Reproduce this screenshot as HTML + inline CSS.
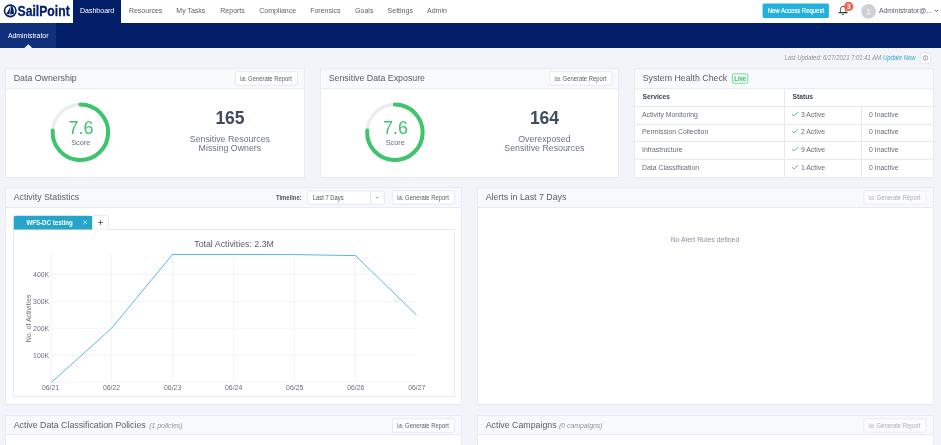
<!DOCTYPE html>
<html>
<head>
<meta charset="utf-8">
<title>Dashboard</title>
<style>
*{box-sizing:border-box;margin:0;padding:0}
html,body{width:941px;height:445px;overflow:hidden;background:#f3f4f9;font-family:"Liberation Sans",sans-serif;color:#4a5060}
.abs{position:absolute}
#top{position:absolute;left:0;top:0;width:941px;height:23px;background:#fff}
.card{position:absolute;background:#fff;border:1px solid #e8ebf5}
.card .hd{position:absolute;left:0;top:0;right:0;background:#f8f9fc;border-bottom:1px solid #e8ebf5}
svg{overflow:visible}
</style>
</head>
<body>
<div id="top"></div>
<div class="abs" style="left:73px;top:0;width:48px;height:23px;background:#021e69"></div>
<div class="abs" style="left:0;top:23px;width:941px;height:25px;background:#021e69"></div>
<div class="abs" style="left:0;top:23px;width:56px;height:25px;background:#10307c"></div>
<div class="card" style="left:5px;top:68px;width:300px;height:110px"><div class="hd" style="height:20px"></div></div>
<div class="card" style="left:320px;top:68px;width:299px;height:110px"><div class="hd" style="height:20px"></div></div>
<div class="card" style="left:634px;top:68px;width:300px;height:110px"><div class="hd" style="height:20px"></div></div>
<div class="abs" style="left:635px;top:106px;width:298px;height:1px;background:#e8eaf3"></div>
<div class="abs" style="left:635px;top:124px;width:298px;height:1px;background:#e8eaf3"></div>
<div class="abs" style="left:635px;top:141px;width:298px;height:1px;background:#e8eaf3"></div>
<div class="abs" style="left:635px;top:159px;width:298px;height:1px;background:#e8eaf3"></div>
<div class="abs" style="left:784px;top:89px;width:1px;height:88px;background:#e8eaf3"></div>
<div class="abs" style="left:861px;top:106px;width:1px;height:71px;background:#e8eaf3"></div>
<div class="card" style="left:5px;top:187px;width:457px;height:218px"><div class="hd" style="height:20px"></div></div>
<div class="card" style="left:477px;top:187px;width:457px;height:218px"><div class="hd" style="height:20px"></div></div>
<div class="abs" style="left:13px;top:229px;width:442px;height:168px;border:1px solid #e8eaf2;background:#fff"></div>
<div class="card" style="left:5px;top:415px;width:457px;height:40px"><div class="hd" style="height:19px"></div></div>
<div class="card" style="left:477px;top:415px;width:457px;height:40px"><div class="hd" style="height:19px"></div></div>
<svg class="abs" style="left:0;top:0;will-change:transform" width="941" height="445" viewBox="0 0 941 445" font-family="Liberation Sans, sans-serif">
<circle cx="10.25" cy="10.87" r="5.75" fill="#fff" stroke="#021e69" stroke-width="1.6"/>
<path d="M10.7 4.9 C9.6 8.4 8.1 11.4 6.2 13.8 L9.3 14.6 C10 11.5 10.5 8.3 10.7 4.9 Z" fill="#021e69"/>
<path d="M11.4 4.6 C13.1 7.5 14 10.6 14 13.8 L9.95 14.6 C10.7 11.4 11.2 8.1 11.4 4.6 Z" fill="#021e69"/>
<text x="17.5" y="16.3" font-weight="700" font-size="14.2" fill="#021e69" stroke="#021e69" stroke-width="0.3" textLength="52.2" lengthAdjust="spacingAndGlyphs">SailPoint</text>
<rect x="762.6" y="3.4" width="66.3" height="14.5" rx="1.5" fill="#22b0df"/>
<g transform="translate(836 3)">
<path d="M3.9 9.7 C4.5 9 4.6 8 4.6 6.4 C4.6 4.6 5.6 3.4 7.1 3.4 C8.6 3.4 9.6 4.6 9.6 6.4 C9.6 8 9.7 9 10.3 9.7" fill="none" stroke="#2e3138" stroke-width="0.95" stroke-linejoin="round"/>
<path d="M3.1 9.6 H11.1" stroke="#2e3138" stroke-width="1.15" stroke-linecap="round"/>
<path d="M6.3 11.3 Q7.1 12 7.9 11.3" fill="none" stroke="#2e3138" stroke-width="1"/>
<circle cx="12.7" cy="3.4" r="4.6" fill="#f4614f"/>
<text x="12.7" y="5.7" text-anchor="middle" font-weight="700" font-size="6.5" fill="#fff">3</text>
</g>
<g transform="translate(861 3.85)">
<circle cx="7.5" cy="7.5" r="7.35" fill="#d0d0d2"/>
<circle cx="7.5" cy="6.5" r="1.45" fill="#e4e6f3"/>
<path d="M5 10.6 C5 8.8 6 8.3 7.5 8.3 C9 8.3 10 8.8 10 10.6 Z" fill="#e4e6f3"/>
</g>
<path d="M934.6 9.9 L936.4 11.7 L938.2 9.9" fill="none" stroke="#4a4f5b" stroke-width="0.9"/>
<path d="M24.4 48 L28.3 44.3 L32.2 48Z" fill="#f3f4f9"/>
<rect x="920.3" y="53" width="10.3" height="10" rx="1.5" fill="#fff" stroke="#dfe2ec" stroke-width="0.9"/>
<g transform="translate(922.7 55.2)"><circle cx="2.8" cy="2.8" r="2.35" fill="none" stroke="#6b7080" stroke-width="0.6"/><path d="M2.8 2.5 V4.2 M2.8 1.4 V2" stroke="#6b7080" stroke-width="0.65"/></g>
<rect x="235.4" y="71.8" width="61.9" height="13.4" rx="1" fill="#fff" stroke="#e1e4ed" stroke-width="0.85"/>
<g transform="translate(240.2 76.1)" opacity="0.8"><path d="M0.35 0 V4.45 H6" fill="none" stroke="#555b69" stroke-width="0.6"/><rect x="1.6" y="1.6" width="0.8" height="1.9" fill="#555b69"/><rect x="2.9" y="0.8" width="0.8" height="2.7" fill="#555b69"/><rect x="4.2" y="1.4" width="0.8" height="2.1" fill="#555b69"/></g>
<rect x="549.9" y="71.8" width="61.9" height="13.4" rx="1" fill="#fff" stroke="#e1e4ed" stroke-width="0.85"/>
<g transform="translate(554.7 76.1)" opacity="0.8"><path d="M0.35 0 V4.45 H6" fill="none" stroke="#555b69" stroke-width="0.6"/><rect x="1.6" y="1.6" width="0.8" height="1.9" fill="#555b69"/><rect x="2.9" y="0.8" width="0.8" height="2.7" fill="#555b69"/><rect x="4.2" y="1.4" width="0.8" height="2.1" fill="#555b69"/></g>
<circle cx="80.4" cy="132.3" r="27.75" fill="none" stroke="#ecedf3" stroke-width="3.4"/>
<path d="M80.4 104.55000000000001 A27.75 27.75 0 1 1 52.70 130.56" fill="none" stroke="#3ec46d" stroke-width="4" stroke-linecap="round"/>
<circle cx="394.9" cy="132.3" r="27.75" fill="none" stroke="#ecedf3" stroke-width="3.4"/>
<path d="M394.9 104.55000000000001 A27.75 27.75 0 1 1 367.20 130.56" fill="none" stroke="#3ec46d" stroke-width="4" stroke-linecap="round"/>
<rect x="732.4" y="73.8" width="15.4" height="9.4" rx="1.3" fill="#f1fbf4" stroke="#6fd596" stroke-width="0.9"/>
<path d="M792.0 114.2 L794.0 116.05 L798.1 112.0" fill="none" stroke="#3cc46c" stroke-width="0.85"/>
<path d="M792.0 131.2 L794.0 133.05 L798.1 129.0" fill="none" stroke="#3cc46c" stroke-width="0.85"/>
<path d="M792.0 149.2 L794.0 151.05 L798.1 147.0" fill="none" stroke="#3cc46c" stroke-width="0.85"/>
<path d="M792.0 167.2 L794.0 169.05 L798.1 165.0" fill="none" stroke="#3cc46c" stroke-width="0.85"/>
<rect x="863.9" y="190.8" width="61.9" height="13.4" rx="1" fill="#fcfcfe" stroke="#e8eaf1" stroke-width="0.85"/>
<g transform="translate(868.7 195.1)" opacity="0.8"><path d="M0.35 0 V4.45 H6" fill="none" stroke="#a9adb8" stroke-width="0.6"/><rect x="1.6" y="1.6" width="0.8" height="1.9" fill="#a9adb8"/><rect x="2.9" y="0.8" width="0.8" height="2.7" fill="#a9adb8"/><rect x="4.2" y="1.4" width="0.8" height="2.1" fill="#a9adb8"/></g>
<rect x="392.4" y="190.8" width="61.9" height="13.4" rx="1" fill="#fff" stroke="#e1e4ed" stroke-width="0.85"/>
<g transform="translate(397.2 195.1)" opacity="0.8"><path d="M0.35 0 V4.45 H6" fill="none" stroke="#555b69" stroke-width="0.6"/><rect x="1.6" y="1.6" width="0.8" height="1.9" fill="#555b69"/><rect x="2.9" y="0.8" width="0.8" height="2.7" fill="#555b69"/><rect x="4.2" y="1.4" width="0.8" height="2.1" fill="#555b69"/></g>
<rect x="307.5" y="191" width="76.8" height="13.3" rx="1.5" fill="#fff" stroke="#e3e6ee" stroke-width="0.9"/>
<path d="M370.4 191 V204.3" stroke="#e1e4ed" stroke-width="1"/>
<path d="M375.8 196.7 L377.4 198.3 L379 196.7" fill="none" stroke="#6b7080" stroke-width="0.7"/>
<path d="M13.7 229.6 V217.3 Q13.7 215.8 15.2 215.8 H90.7 Q92.2 215.8 92.2 217.3 V229.6 Z" fill="#27a4c9"/>
<path d="M83.4 220.5 L87 224.1 M87 220.5 L83.4 224.1" stroke="#bfe4f0" stroke-width="0.9"/>
<path d="M92.7 229.6 V216.9 Q92.7 215.6 94 215.6 H107 Q108.3 215.6 108.3 216.9 V229.6" fill="#fff" stroke="#e3e6ee" stroke-width="0.9"/>
<path d="M100.45 220.1 V224.9 M98.05 222.5 H102.85" stroke="#30343e" stroke-width="0.7"/>
<line x1="51.50" y1="254" x2="51.50" y2="382.1" stroke="#eff1f6" stroke-width="0.8"/>
<line x1="111.50" y1="254" x2="111.50" y2="382.1" stroke="#eff1f6" stroke-width="0.8"/>
<line x1="172.50" y1="254" x2="172.50" y2="382.1" stroke="#eff1f6" stroke-width="0.8"/>
<line x1="233.50" y1="254" x2="233.50" y2="382.1" stroke="#eff1f6" stroke-width="0.8"/>
<line x1="294.50" y1="254" x2="294.50" y2="382.1" stroke="#eff1f6" stroke-width="0.8"/>
<line x1="355.50" y1="254" x2="355.50" y2="382.1" stroke="#eff1f6" stroke-width="0.8"/>
<line x1="51.50" y1="382.10" x2="416.50" y2="382.10" stroke="#eff1f6" stroke-width="0.8"/>
<line x1="51.50" y1="355.17" x2="416.50" y2="355.17" stroke="#eff1f6" stroke-width="0.8"/>
<line x1="51.50" y1="328.24" x2="416.50" y2="328.24" stroke="#eff1f6" stroke-width="0.8"/>
<line x1="51.50" y1="301.31" x2="416.50" y2="301.31" stroke="#eff1f6" stroke-width="0.8"/>
<line x1="51.50" y1="274.38" x2="416.50" y2="274.38" stroke="#eff1f6" stroke-width="0.8"/>
<polyline fill="none" stroke="#55bbdd" stroke-width="1" stroke-linejoin="round" points="51.50,382.30 111.50,328.30 172.50,254.50 233.50,254.50 294.50,254.60 355.50,255.60 416.50,315.00"/>
<rect x="392.4" y="418.8" width="61.9" height="13.4" rx="1" fill="#fff" stroke="#e1e4ed" stroke-width="0.85"/>
<g transform="translate(397.2 423.1)" opacity="0.8"><path d="M0.35 0 V4.45 H6" fill="none" stroke="#555b69" stroke-width="0.6"/><rect x="1.6" y="1.6" width="0.8" height="1.9" fill="#555b69"/><rect x="2.9" y="0.8" width="0.8" height="2.7" fill="#555b69"/><rect x="4.2" y="1.4" width="0.8" height="2.1" fill="#555b69"/></g>
<rect x="863.9" y="418.8" width="61.9" height="13.4" rx="1" fill="#fcfcfe" stroke="#e8eaf1" stroke-width="0.85"/>
<g transform="translate(868.7 423.1)" opacity="0.8"><path d="M0.35 0 V4.45 H6" fill="none" stroke="#a9adb8" stroke-width="0.6"/><rect x="1.6" y="1.6" width="0.8" height="1.9" fill="#a9adb8"/><rect x="2.9" y="0.8" width="0.8" height="2.7" fill="#a9adb8"/><rect x="4.2" y="1.4" width="0.8" height="2.1" fill="#a9adb8"/></g>
<text x="80.00" y="13" font-size="7" fill="#fff" font-weight="400" font-style="normal" text-anchor="start" >Dashboard</text>
<text x="128.90" y="13" font-size="7" fill="#5a5f6a" font-weight="400" font-style="normal" text-anchor="start" >Resources</text>
<text x="176.30" y="13" font-size="7" fill="#5a5f6a" font-weight="400" font-style="normal" text-anchor="start" >My Tasks</text>
<text x="220.30" y="13" font-size="7" fill="#5a5f6a" font-weight="400" font-style="normal" text-anchor="start" >Reports</text>
<text x="259.20" y="13" font-size="7" fill="#5a5f6a" font-weight="400" font-style="normal" text-anchor="start" >Compliance</text>
<text x="310.20" y="13" font-size="7" fill="#5a5f6a" font-weight="400" font-style="normal" text-anchor="start" >Forensics</text>
<text x="355.10" y="13" font-size="7" fill="#5a5f6a" font-weight="400" font-style="normal" text-anchor="start" >Goals</text>
<text x="387.60" y="13" font-size="7" fill="#5a5f6a" font-weight="400" font-style="normal" text-anchor="start" >Settings</text>
<text x="427.00" y="13" font-size="7" fill="#5a5f6a" font-weight="400" font-style="normal" text-anchor="start" >Admin</text>
<text x="767.70" y="13" font-size="6.4" fill="#fff" font-weight="400" font-style="normal" text-anchor="start" stroke="#fff" stroke-width="0.2" textLength="56.4" lengthAdjust="spacingAndGlyphs">New Access Request</text>
<text x="879.00" y="13" font-size="6.85" fill="#5a5f6b" font-weight="400" font-style="normal" text-anchor="start" >Administrator@...</text>
<text x="7.90" y="38" font-size="6.9" fill="#fff" font-weight="400" font-style="normal" text-anchor="start" >Administrator</text>
<text x="784.40" y="60" font-size="6.3" fill="#8d92a0" font-weight="400" font-style="italic" text-anchor="start"  textLength="131.2" lengthAdjust="spacingAndGlyphs">Last Updated: 6/27/2021 7:01:41 AM <tspan fill="#2ba6da">Update Now</tspan></text>
<text x="13.70" y="81" font-size="8.8" fill="#5a5d67" font-weight="400" font-style="normal" text-anchor="start" >Data Ownership</text>
<text x="248.10" y="81" font-size="6.4" fill="#555b69" font-weight="400" font-style="normal" text-anchor="start"  textLength="43.7" lengthAdjust="spacingAndGlyphs">Generate Report</text>
<text x="328.70" y="81" font-size="8.8" fill="#5a5d67" font-weight="400" font-style="normal" text-anchor="start" >Sensitive Data Exposure</text>
<text x="562.60" y="81" font-size="6.4" fill="#555b69" font-weight="400" font-style="normal" text-anchor="start"  textLength="43.7" lengthAdjust="spacingAndGlyphs">Generate Report</text>
<text x="642.70" y="81" font-size="8.8" fill="#5a5d67" font-weight="400" font-style="normal" text-anchor="start" >System Health Check</text>
<text x="81.00" y="134" font-size="18" fill="#3ec46d" font-weight="400" font-style="normal" text-anchor="middle" >7.6</text>
<text x="80.70" y="145" font-size="7.3" fill="#6a7080" font-weight="400" font-style="normal" text-anchor="middle" >Score</text>
<text x="230.00" y="124" font-size="17.5" fill="#414a5f" font-weight="700" font-style="normal" text-anchor="middle" >165</text>
<text x="229.90" y="142" font-size="8.8" fill="#6a7286" font-weight="400" font-style="normal" text-anchor="middle" >Sensitive Resources</text>
<text x="229.90" y="151" font-size="8.8" fill="#6a7286" font-weight="400" font-style="normal" text-anchor="middle" >Missing Owners</text>
<text x="395.50" y="134" font-size="18" fill="#3ec46d" font-weight="400" font-style="normal" text-anchor="middle" >7.6</text>
<text x="395.20" y="145" font-size="7.3" fill="#6a7080" font-weight="400" font-style="normal" text-anchor="middle" >Score</text>
<text x="544.50" y="124" font-size="17.5" fill="#414a5f" font-weight="700" font-style="normal" text-anchor="middle" >164</text>
<text x="544.40" y="142" font-size="8.8" fill="#6a7286" font-weight="400" font-style="normal" text-anchor="middle" >Overexposed</text>
<text x="544.40" y="151" font-size="8.8" fill="#6a7286" font-weight="400" font-style="normal" text-anchor="middle" >Sensitive Resources</text>
<text x="734.30" y="81" font-size="6.4" fill="#3cbf69" font-weight="700" font-style="normal" text-anchor="start"  textLength="11.8" lengthAdjust="spacingAndGlyphs">Live</text>
<text x="642.50" y="99" font-size="6.7" fill="#3c4558" font-weight="700" font-style="normal" text-anchor="start" >Services</text>
<text x="792.50" y="99" font-size="6.7" fill="#3c4558" font-weight="700" font-style="normal" text-anchor="start" >Status</text>
<text x="642.00" y="117" font-size="6.9" fill="#666c7a" font-weight="400" font-style="normal" text-anchor="start" >Activity Monitoring</text>
<text x="800.90" y="117" font-size="6.9" fill="#666c7a" font-weight="400" font-style="normal" text-anchor="start" >3 Active</text>
<text x="869.00" y="117" font-size="6.9" fill="#666c7a" font-weight="400" font-style="normal" text-anchor="start" >0 Inactive</text>
<text x="642.00" y="134" font-size="6.9" fill="#666c7a" font-weight="400" font-style="normal" text-anchor="start" >Permission Collection</text>
<text x="800.90" y="134" font-size="6.9" fill="#666c7a" font-weight="400" font-style="normal" text-anchor="start" >2 Active</text>
<text x="869.00" y="134" font-size="6.9" fill="#666c7a" font-weight="400" font-style="normal" text-anchor="start" >0 Inactive</text>
<text x="642.00" y="152" font-size="6.9" fill="#666c7a" font-weight="400" font-style="normal" text-anchor="start" >Infrastructure</text>
<text x="800.90" y="152" font-size="6.9" fill="#666c7a" font-weight="400" font-style="normal" text-anchor="start" >9 Active</text>
<text x="869.00" y="152" font-size="6.9" fill="#666c7a" font-weight="400" font-style="normal" text-anchor="start" >0 Inactive</text>
<text x="642.00" y="170" font-size="6.9" fill="#666c7a" font-weight="400" font-style="normal" text-anchor="start" >Data Classification</text>
<text x="800.90" y="170" font-size="6.9" fill="#666c7a" font-weight="400" font-style="normal" text-anchor="start" >1 Active</text>
<text x="869.00" y="170" font-size="6.9" fill="#666c7a" font-weight="400" font-style="normal" text-anchor="start" >0 Inactive</text>
<text x="13.70" y="200" font-size="8.8" fill="#5a5d67" font-weight="400" font-style="normal" text-anchor="start" >Activity Statistics</text>
<text x="485.70" y="200" font-size="8.8" fill="#5a5d67" font-weight="400" font-style="normal" text-anchor="start" >Alerts in Last 7 Days</text>
<text x="876.60" y="200" font-size="6.4" fill="#a9adb8" font-weight="400" font-style="normal" text-anchor="start"  textLength="43.7" lengthAdjust="spacingAndGlyphs">Generate Report</text>
<text x="705.00" y="242" font-size="6.9" fill="#8a90a0" font-weight="400" font-style="normal" text-anchor="middle" >No Alert Rules defined</text>
<text x="405.10" y="200" font-size="6.4" fill="#555b69" font-weight="400" font-style="normal" text-anchor="start"  textLength="43.7" lengthAdjust="spacingAndGlyphs">Generate Report</text>
<text x="276.00" y="200" font-size="6.3" fill="#4d5260" font-weight="700" font-style="normal" text-anchor="start"  textLength="25.6" lengthAdjust="spacingAndGlyphs">Timeline:</text>
<text x="312.80" y="200" font-size="6.3" fill="#4c515d" font-weight="400" font-style="normal" text-anchor="start"  textLength="30.8" lengthAdjust="spacingAndGlyphs">Last 7 Days</text>
<text x="26.40" y="225" font-size="6.6" fill="#fff" font-weight="700" font-style="normal" text-anchor="start"  textLength="46.5" lengthAdjust="spacingAndGlyphs">WFS-DC testing</text>
<text x="234.10" y="247" font-size="8.8" fill="#565c6b" font-weight="400" font-style="normal" text-anchor="middle" >Total Activities: 2.3M</text>
<text x="49.20" y="358" font-size="6.9" fill="#6b7080" font-weight="400" font-style="normal" text-anchor="end" >100K</text>
<text x="49.20" y="331" font-size="6.9" fill="#6b7080" font-weight="400" font-style="normal" text-anchor="end" >200K</text>
<text x="49.20" y="304" font-size="6.9" fill="#6b7080" font-weight="400" font-style="normal" text-anchor="end" >300K</text>
<text x="49.20" y="277" font-size="6.9" fill="#6b7080" font-weight="400" font-style="normal" text-anchor="end" >400K</text>
<text x="50.50" y="390" font-size="6.9" fill="#6b7080" font-weight="400" font-style="normal" text-anchor="middle" >06/21</text>
<text x="111.55" y="390" font-size="6.9" fill="#6b7080" font-weight="400" font-style="normal" text-anchor="middle" >06/22</text>
<text x="172.60" y="390" font-size="6.9" fill="#6b7080" font-weight="400" font-style="normal" text-anchor="middle" >06/23</text>
<text x="233.65" y="390" font-size="6.9" fill="#6b7080" font-weight="400" font-style="normal" text-anchor="middle" >06/24</text>
<text x="294.70" y="390" font-size="6.9" fill="#6b7080" font-weight="400" font-style="normal" text-anchor="middle" >06/25</text>
<text x="355.75" y="390" font-size="6.9" fill="#6b7080" font-weight="400" font-style="normal" text-anchor="middle" >06/26</text>
<text x="416.80" y="390" font-size="6.9" fill="#6b7080" font-weight="400" font-style="normal" text-anchor="middle" >06/27</text>
<text x="0" y="0" font-size="7" fill="#6b7080" text-anchor="middle" transform="translate(31.2 318.4) rotate(-90)">No. of Activities</text>
<text x="13.70" y="428" font-size="8.8" fill="#5a5d67" font-weight="400" font-style="normal" text-anchor="start" >Active Data Classification Policies</text>
<text x="149.20" y="428" font-size="6.9" fill="#8e93a0" font-weight="400" font-style="italic" text-anchor="start" >(1 policies)</text>
<text x="405.10" y="428" font-size="6.4" fill="#555b69" font-weight="400" font-style="normal" text-anchor="start"  textLength="43.7" lengthAdjust="spacingAndGlyphs">Generate Report</text>
<text x="485.70" y="428" font-size="8.8" fill="#5a5d67" font-weight="400" font-style="normal" text-anchor="start" >Active Campaigns</text>
<text x="558.90" y="428" font-size="6.9" fill="#8e93a0" font-weight="400" font-style="italic" text-anchor="start" >(0 campaigns)</text>
<text x="876.60" y="428" font-size="6.4" fill="#a9adb8" font-weight="400" font-style="normal" text-anchor="start"  textLength="43.7" lengthAdjust="spacingAndGlyphs">Generate Report</text>
</svg>
</body>
</html>
